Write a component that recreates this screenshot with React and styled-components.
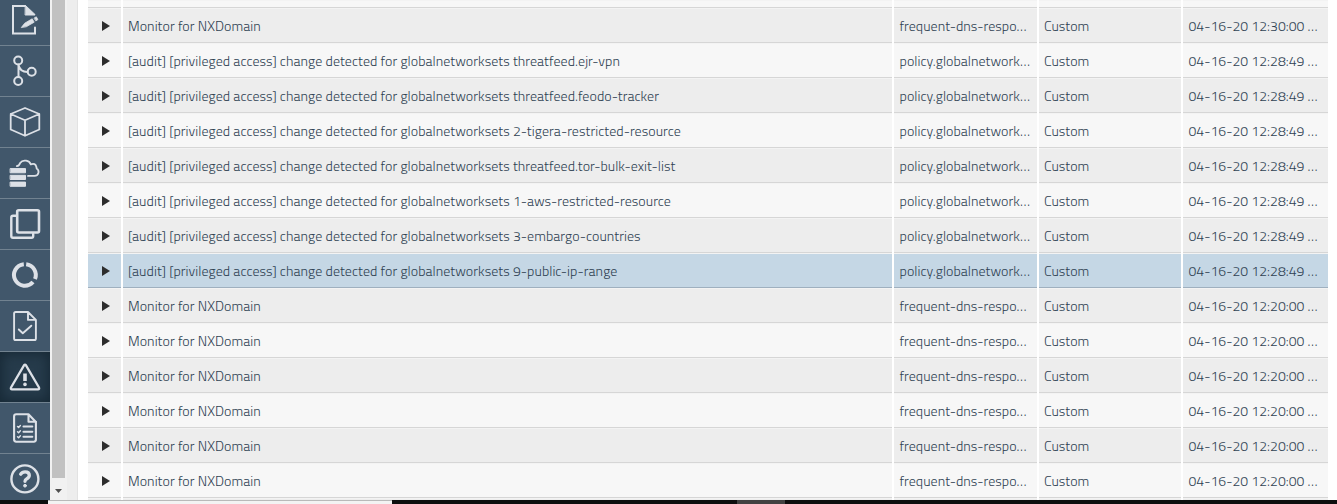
import React from 'react';
import styled, { createGlobalStyle, css } from 'styled-components';

const GlobalStyle = createGlobalStyle`
  * { box-sizing: border-box; }
  body {
    margin: 0;
    overflow: hidden;
    background: #fff;
    font-family: "Titillium Web", Roboto, "Liberation Sans", sans-serif;
  }
`;

const Screen = styled.div`
  width: 1337px;
  height: 504px;
  display: flex;
  flex-direction: column;
  overflow: hidden;
`;

const Main = styled.div`
  height: 500px;
  display: flex;
  overflow: hidden;
`;

const Sidebar = styled.nav`
  width: 50px;
  flex: none;
  height: 500px;
  display: flex;
  flex-direction: column;
  margin-top: -5px;
`;

const NavItem = styled.div`
  height: 51px;
  flex: none;
  background: #41576b;
  border-bottom: 1px solid #718290;
  ${(p) => p.$active && css`
    background: #263b4b;
    box-shadow: inset 0 0 12px 2px #172936;
  `}
  svg {
    display: block;
    width: 50px;
    height: 50px;
    fill: none;
    stroke: #dde1e7;
    stroke-width: 2;
    stroke-linejoin: round;
    stroke-linecap: round;
  }
`;

const ScrollTrack = styled.div`
  width: 17px;
  flex: none;
  padding: 0 2px;
  background: #f1f1f1;
  display: flex;
  flex-direction: column;
  align-items: center;
`;

const ScrollThumb = styled.div`
  width: 13px;
  height: 478px;
  background: #c1c1c1;
`;

const ScrollArrow = styled.svg`
  width: 9px;
  height: 5px;
  margin-top: 11px;
  fill: #505050;
`;

const Gutter = styled.div`
  width: 11px;
  flex: none;
  background: #ededed;
  border-right: 1px solid #e2e2e2;
`;

const Table = styled.div`
  width: 1240px;
  margin-left: 10px;
  flex: none;
  height: 500px;
  overflow: hidden;
`;

const Row = styled.div`
  display: grid;
  grid-template-columns: 33px 769px 143px 142px 145px;
  column-gap: 2px;
  height: ${(p) => p.$height || 35}px;
  --bg: ${(p) => (p.$selected ? '#c5d7e5' : p.$odd ? '#ededed' : '#f7f7f7')};
  --line: ${(p) => (p.$selected ? '#9fb0bf' : '#d6d6d6')};
`;

const Cell = styled.div`
  background: var(--bg);
  border-top: 1px solid #f3f3f3;
  border-bottom: 1px solid var(--line);
  padding-left: ${(p) => p.$pad || 5}px;
  line-height: 33px;
  font-size: 14px;
  font-weight: 300;
  color: #2f4253;
  white-space: nowrap;
  overflow: hidden;
  letter-spacing: ${(p) => p.$track || 0}px;
`;

const ExpandCell = styled(Cell)`
  display: flex;
  align-items: center;
  padding-left: 14px;
  padding-top: 1px;
`;

const Arrow = styled.svg`
  width: 8px;
  height: 10px;
  fill: #2d2d2d;
`;

const Taskbar = styled.div`
  height: 4px;
  display: flex;
  background: #0d0e0e;
`;

const TaskSearch = styled.div`
  width: 344px;
  margin-left: 48px;
  background: #f3f3f3;
  border-top: 1px solid #b9b9b9;
`;

const TaskButton = styled.div`
  width: 48px;
  margin-left: 345px;
  background: #424242;
`;

const icons = [
  <svg key="edit" viewBox="0 0 50 50">
    <path d="M25 10.9H13v27.6h22V32.5" strokeLinejoin="miter" />
    <path d="M25.5 10.5l9.5 9v.5h-9.5z" fill="#dde1e7" strokeWidth="1" />
    <path d="M21.5 32.3l3.2-4.1 7.5-4.4 2 3.4-7.6 4.4zM34.3 23l2-1.2 1.6 2.8-1.8 1.2z" fill="#dde1e7" strokeWidth=".8" />
  </svg>,
  <svg key="branch" viewBox="0 0 50 50">
    <circle cx="18.2" cy="14.5" r="4" />
    <circle cx="18.2" cy="35" r="4" />
    <circle cx="31.7" cy="25.8" r="4" />
    <path d="M18.5 18.5V31M18.5 19q1.5 7 9 7" />
  </svg>,
  <svg key="cube" viewBox="0 0 50 50">
    <path d="M25 11L39.3 17V32.5L25 38.8 10.7 32.5V17zM10.7 17L25 23.3 39.3 17M25 23.3V38.8" strokeWidth="1.8" />
  </svg>,
  <svg key="cloud" viewBox="0 0 50 50">
    <path d="M16.8 18.2q2.4-.3 3.3-3.2 2-3 6-2.3 3.4.6 4.7 3.6 4.6-1.6 5.6 2.7l.3 1.6q2.2 1.5 1.8 4-.7 3.3-4 3.3H28" strokeWidth="1.8" />
    <path d="M10.5 20.6h15v4.2h-15zM10.5 27.3h15v4.2h-15zM10.5 34.1h15v4.2h-15z" fill="#dde1e7" strokeWidth="1" />
  </svg>,
  <svg key="copy" viewBox="0 0 50 50">
    <rect x="17.2" y="11.3" width="21.8" height="22.2" rx="1.5" strokeWidth="2.6" />
    <path d="M16 16.7H13q-1.7 0-1.7 1.7V37q0 1.7 1.7 1.7H31.5q1.7 0 1.7-1.7V35" strokeWidth="2.4" />
  </svg>,
  <svg key="ring" viewBox="0 0 50 50">
    <path style={{ strokeLinecap: 'butt' }} d="M26.2 14.2A10.8 10.8 0 0 1 35 29M33 32A10.8 10.8 0 1 1 23.8 14.2" strokeWidth="4" />
  </svg>,
  <svg key="check" viewBox="0 0 50 50">
    <path d="M28 11H15.7q-1.6 0-1.6 1.6v24.8q0 1.6 1.6 1.6h18.6q1.6 0 1.6-1.6V18.9zV18.9h7.9M18.8 28.5l4 3.7 8.5-7.5" strokeWidth="1.9" />
  </svg>,
  <svg key="alert" viewBox="0 0 50 50">
    <path d="M24 13.3q1-1.2 2 0L39 35.5q.6 1.8-1 1.8H12q-1.6 0-1-1.8z" strokeWidth="2.3" />
    <path d="M25 21.5v7.5" strokeWidth="3.6" style={{ strokeLinecap: 'butt' }} />
    <circle cx="25" cy="32.4" r="1.2" strokeWidth="1.2" fill="#dde1e7" />
  </svg>,
  <svg key="list" viewBox="0 0 50 50">
    <path d="M28.5 11.3H16.2q-2.1 0-2.1 2.1v23.2q0 2.1 2.1 2.1h17.6q2.1 0 2.1-2.1V19zV18.8H36" strokeWidth="2.1" />
    <path d="M23.5 23.5h8.8M23.5 28.7h8.8M23.5 33.8h8.8" strokeWidth="2.1" />
    <path d="M17.5 23.5l1.1 1 1.8-2M17.5 28.7l1.1 1 1.8-2M17.5 33.8l1.1 1 1.8-2" strokeWidth="1.4" />
  </svg>,
  <svg key="help" viewBox="0 0 50 50">
    <circle cx="24.9" cy="24.9" r="13.5" strokeWidth="2.4" />
    <path d="M20.7 20.2q1.5-2.4 4.4-2.4 4.2 0 4.2 3.5 0 2.1-2.4 3.4-1.9 1-1.9 2.6" strokeWidth="3.3" />
    <circle cx="25" cy="31.7" r="1.4" strokeWidth="1" fill="#dde1e7" />
  </svg>,
];

const TRACK = 0.056;
const audit = '[audit] [privileged access] change detected for globalnetworksets ';
const nx = (time) => ({ text: 'Monitor for NXDomain', type: 'frequent-dns-respo…', time });
const change = (name) => ({ text: audit + name, type: 'policy.globalnetwork…', time: '12:28:49' });

const rows = [
  nx('12:30:00'),
  change('threatfeed.ejr-vpn'),
  change('threatfeed.feodo-tracker'),
  change('2-tigera-restricted-resource'),
  change('threatfeed.tor-bulk-exit-list'),
  change('1-aws-restricted-resource'),
  change('3-embargo-countries'),
  { ...change('9-public-ip-range'), selected: true },
  ...Array.from({ length: 6 }, () => nx('12:20:00')),
];

export default function App() {
  return (
    <Screen>
      <GlobalStyle />
      <Main>
        <Sidebar>
          {icons.map((icon, i) => <NavItem key={i} $active={i === 7}>{icon}</NavItem>)}
        </Sidebar>
        <ScrollTrack>
          <ScrollThumb />
          <ScrollArrow viewBox="0 0 9 5"><path d="M1 0h7L4.5 4z" /></ScrollArrow>
        </ScrollTrack>
        <Gutter />
        <Table>
          <Row $height={8}><Cell /><Cell /><Cell /><Cell /><Cell /></Row>
          {rows.map((r, i) => (
            <Row key={i} $odd={i % 2 === 0} $selected={r.selected}>
              <ExpandCell><Arrow viewBox="0 0 8 10"><path d="M0 0l8 5-8 5z" /></Arrow></ExpandCell>
              <Cell $track={TRACK}>{r.text}</Cell>
              <Cell $track={TRACK} $pad={5.5}>{r.type}</Cell>
              <Cell>Custom</Cell>
              <Cell $track={0.03} $pad={5.5}>04-16-20 {r.time} …</Cell>
            </Row>
          ))}
          <Row $odd><Cell /><Cell /><Cell /><Cell /><Cell /></Row>
        </Table>
      </Main>
      <Taskbar><TaskSearch /><TaskButton /></Taskbar>
    </Screen>
  );
}
